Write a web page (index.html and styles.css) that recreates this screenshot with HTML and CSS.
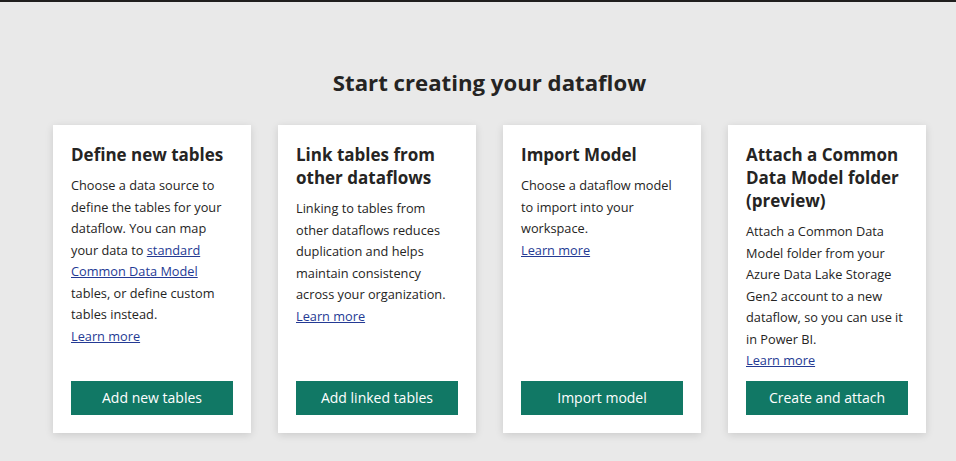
FILE: index.html
```html
<!DOCTYPE html>
<html lang="en">
<head>
<meta charset="utf-8">
<title>Start creating your dataflow</title>
<link rel="stylesheet" href="styles.css">
</head>
<body>
<div class="topbar"></div>
<main class="page">
  <h1 class="title">Start creating your dataflow</h1>
  <div class="cards">
    <section class="card">
      <div class="card-body">
        <h2 class="card-title">Define new tables</h2>
        <p class="card-text">Choose a data source to define the tables for your dataflow. You can map your data to <a href="#" class="link">standard Common Data Model</a> tables, or define custom tables instead.</p>
        <a href="#" class="link">Learn more</a>
      </div>
      <button class="btn">Add new tables</button>
    </section>
    <section class="card">
      <div class="card-body">
        <h2 class="card-title">Link tables from other dataflows</h2>
        <p class="card-text">Linking to tables from other dataflows reduces duplication and helps maintain consistency across your organization.</p>
        <a href="#" class="link">Learn more</a>
      </div>
      <button class="btn">Add linked tables</button>
    </section>
    <section class="card">
      <div class="card-body">
        <h2 class="card-title">Import Model</h2>
        <p class="card-text">Choose a dataflow model to import into your workspace.</p>
        <a href="#" class="link">Learn more</a>
      </div>
      <button class="btn">Import model</button>
    </section>
    <section class="card">
      <div class="card-body">
        <h2 class="card-title">Attach a Common Data Model folder (preview)</h2>
        <p class="card-text">Attach a Common Data Model folder from your Azure Data Lake Storage Gen2 account to a new dataflow, so you can use it in Power BI.</p>
        <a href="#" class="link">Learn more</a>
      </div>
      <button class="btn">Create and attach</button>
    </section>
  </div>
</main>
</body>
</html>
```

FILE: styles.css
```css
* { box-sizing: border-box; }
html, body { margin: 0; padding: 0; }
body {
  background: #e9e9e9;
  font-family: "Open Sans", "Noto Sans", sans-serif;
  color: #252423;
  width: 956px;
  height: 461px;
  overflow: hidden;
}
.topbar {
  height: 2px;
  background: #201f1e;
}
.page {
  padding-top: 66px;
}
.title {
  margin: 0;
  padding-left: 23px;
  text-align: center;
  font-size: 22.2px;
  line-height: 30px;
  font-weight: 700;
  color: #252423;
}
.cards {
  display: flex;
  gap: 27px;
  padding-left: 53px;
  margin-top: 27px;
}
.card {
  width: 198px;
  height: 308px;
  background: #fff;
  box-shadow: 0 2px 8px rgba(0,0,0,0.13);
  padding: 18px;
  display: flex;
  flex-direction: column;
}
.card-body {
  flex: 1;
  font-size: 12.75px;
  line-height: 21.5px;
}
.card-title {
  margin: 0;
  font-size: 17px;
  line-height: 23px;
  font-weight: 700;
  color: #252423;
}
.card-text {
  margin: 9px 0 0;
  color: #252423;
}
.link {
  color: #243a94;
  text-decoration: underline;
}
.btn {
  width: 162px;
  height: 34px;
  border: none;
  background: #117865;
  color: #fff;
  font-family: inherit;
  font-size: 14px;
  line-height: 32px;
  padding: 0;
  cursor: pointer;
}
```
